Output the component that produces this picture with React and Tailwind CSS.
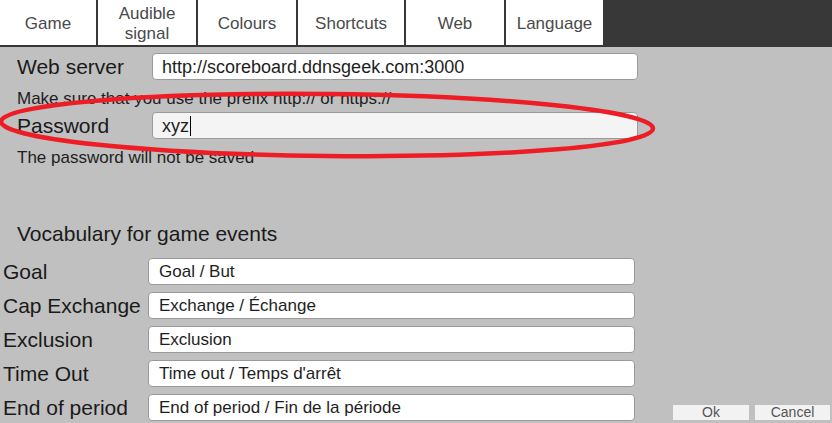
import React from "react";

const tabs = [
    { label: "Game", w: "w-[96px]" },
    { label: "Audible signal", w: "w-[98px]" },
    { label: "Colours", w: "w-[98px]" },
    { label: "Shortcuts", w: "w-[106px]" },
    { label: "Web", w: "w-[98px]" },
    { label: "Language", w: "w-[97px]" },
];

const vocab = [
    ["Goal", "Goal / But"],
    ["Cap Exchange", "Exchange / Échange"],
    ["Exclusion", "Exclusion"],
    ["Time Out", "Time out / Temps d'arrêt"],
    ["End of period", "End of period / Fin de la période"],
];

function Field({ children, className = "" }) {
    return (
        <div className={`h-[27px] rounded-[4px] border border-[#9a9a9a] flex items-center text-[17px] text-[#1e1e1e] leading-none ${className}`}>
            {children}
        </div>
    );
}

export default function App() {
    return (
        <div className="relative w-[832px] h-[423px] overflow-hidden bg-[#c0c0c0] font-['Liberation_Sans',Arial,sans-serif]">
            {/* tab strip */}
            <div className="flex gap-[2px] h-[47px] bg-[#383838] border-b-2 border-[#383838]">
                {tabs.map(t => (
                    <div key={t.label} className={`${t.w} h-[45px] bg-white flex items-center justify-center text-center text-[17px] leading-[20px] text-[#4a4a4a] px-2 pt-[3px]`}>
                        {t.label}
                    </div>
                ))}
            </div>

            {/* web server */}
            <div className="pl-[17px] pt-[6px]">
                <div className="flex items-center h-[27px]">
                    <span className="w-[135px] text-[21px] text-[#1a1a1a]">Web server</span>
                    <Field className="w-[486px] bg-white pl-[9px] text-[18px]">http://scoreboard.ddnsgeek.com:3000</Field>
                </div>
                <p className="mt-[9px] text-[17px] leading-[20px] text-[#1e1e1e]">Make sure that you use the prefix http:// or https://</p>
                <div className="flex items-center h-[27px] mt-[3px]">
                    <span className="w-[135px] text-[21px] text-[#1a1a1a]">Password</span>
                    <Field className="w-[486px] bg-[#f4f4f4] pl-[9px] text-[18px]">
                        xyz<span className="inline-block w-px h-[20px] bg-black ml-px" />
                    </Field>
                </div>
                <p className="mt-[9px] text-[17px] leading-[20px] text-[#1e1e1e]">The password will not be saved</p>
                <p className="mt-[53px] text-[21px] leading-[26px] text-[#1a1a1a]">Vocabulary for game events</p>
            </div>

            {/* vocabulary rows */}
            <div className="pl-[3px] mt-[11px] flex flex-col gap-[7px]">
                {vocab.map(([label, value], i) => (
                    <div key={label} className="flex items-center h-[27px]">
                        <span className="w-[145px] text-[21px] text-[#1a1a1a] whitespace-nowrap">{label}</span>
                        <Field className="w-[487px] bg-white pl-[10px]">{value}</Field>
                        {i === vocab.length - 1 && (
                            <div className="flex gap-[6px] ml-[38px] mt-[10px]">
                                <button className="w-[76px] h-[15px] bg-[#f2f2f2] text-[14px] leading-[15px] text-[#555]">Ok</button>
                                <button className="w-[75px] h-[15px] bg-[#f2f2f2] text-[14px] leading-[15px] text-[#555]">Cancel</button>
                            </div>
                        )}
                    </div>
                ))}
            </div>

            {/* red annotation ellipse */}
            <svg className="absolute left-0 top-0 pointer-events-none" width="832" height="423">
                <ellipse cx="327" cy="125" rx="326" ry="31" fill="none" stroke="#ee1c25" strokeWidth="4.5" transform="rotate(0.6 327 125)" />
            </svg>
        </div>
    );
}
